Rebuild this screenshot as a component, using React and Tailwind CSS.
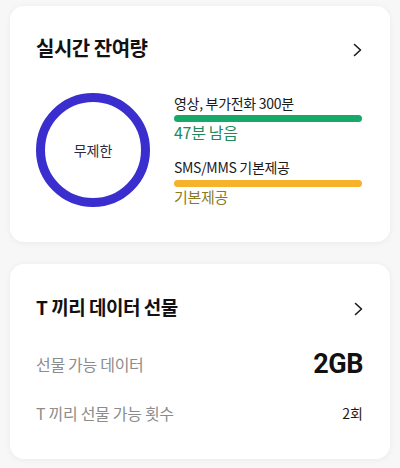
import React from "react";

const font = { fontFamily: '"Noto Sans CJK KR", "Noto Sans", sans-serif' };

function Chevron() {
  return (
    <svg width="9" height="14" viewBox="0 0 9 14" fill="none" aria-hidden className="mt-[3px]">
      <polyline points="1.5,1.5 7.5,7 1.5,12.5" stroke="#1a1a1a" strokeWidth="1.6" strokeLinecap="round" strokeLinejoin="round" />
    </svg>
  );
}

export default function App() {
  return (
    <div
      className="w-[400px] h-[468px] bg-[#f7f7f7] pt-[6px] px-[10px] flex flex-col gap-[22px] overflow-hidden"
      style={font}
    >
      {/* 실시간 잔여량 */}
      <section className="h-[236px] bg-white rounded-[14px] shadow-[0_1px_6px_rgba(0,0,0,0.06)] pl-[26px] pr-[28px] pt-[28px]">
        <header className="flex items-center justify-between h-[28px]">
          <h2 className="text-[20px] leading-[28px] font-semibold text-[#111] tracking-[-0.5px]">실시간 잔여량</h2>
          <Chevron />
        </header>

        <div className="flex items-center mt-[31px] gap-[24px]">
          <div className="w-[114px] h-[114px] shrink-0 rounded-full border-[9px] border-[#3a2fce] flex items-center justify-center">
            <span className="text-[14px] leading-[18px] text-[#2b2b44]">무제한</span>
          </div>

          <div className="flex-1 flex flex-col">
            <div className="text-[14px] leading-[18px] text-[#1a1a1a] tracking-[-0.3px]">영상, 부가전화 300분</div>
            <div className="mt-[3px] h-[7px] rounded-full bg-[#17a96a]" />
            <div className="text-[16px] leading-[20px] text-[#1e8a5c] tracking-[-0.3px]">47분 남음</div>

            <div className="mt-[16px] text-[14px] leading-[18px] text-[#1a1a1a] tracking-[-0.3px]">SMS/MMS 기본제공</div>
            <div className="mt-[4px] h-[7px] rounded-full bg-[#f6b22b]" />
            <div className="text-[15px] leading-[20px] text-[#8a7a22] tracking-[-0.3px]">기본제공</div>
          </div>
        </div>
      </section>

      {/* T 끼리 데이터 선물 */}
      <section className="h-[195px] bg-white rounded-[14px] shadow-[0_1px_6px_rgba(0,0,0,0.06)] pl-[26px] pr-[27px] pt-[29px]">
        <header className="flex items-center justify-between h-[28px]">
          <h2 className="text-[19px] leading-[28px] font-semibold text-[#111] tracking-[-0.5px]">T 끼리 데이터 선물</h2>
          <Chevron />
        </header>

        <div className="mt-[29px] flex items-center justify-between h-[28px]">
          <span className="text-[16px] text-[#8c8c8c] tracking-[-0.3px]">선물 가능 데이터</span>
          <span
            className="text-[27px] font-bold text-[#111] tracking-[-0.5px]"
            style={{ fontFamily: 'Roboto, "Noto Sans CJK KR", sans-serif' }}
          >
            2GB
          </span>
        </div>

        <div className="mt-[21px] flex items-center justify-between h-[28px]">
          <span className="text-[16px] text-[#8c8c8c] tracking-[-0.3px]">T 끼리 선물 가능 횟수</span>
          <span className="text-[14px] text-[#1a1a1a]">2회</span>
        </div>
      </section>
    </div>
  );
}
